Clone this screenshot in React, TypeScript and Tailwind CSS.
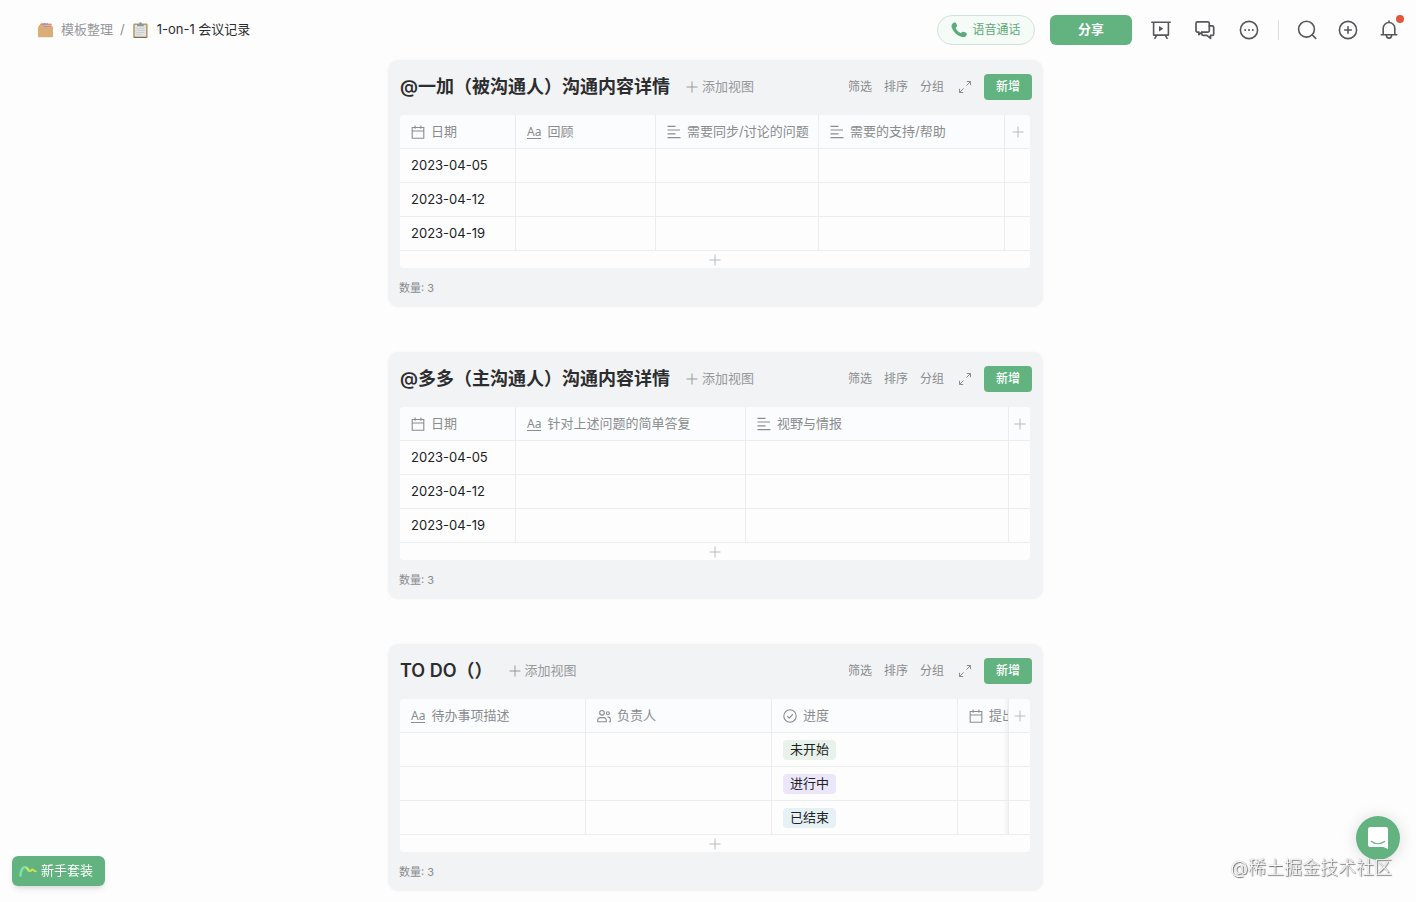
import type { ReactNode } from "react";

type IconProps = { className?: string };

function Svg({ className, children, width = 1.5 }: IconProps & { children: ReactNode; width?: number }) {
  return (
    <svg
      viewBox="0 0 20 20"
      fill="none"
      stroke="currentColor"
      strokeWidth={width}
      strokeLinecap="round"
      strokeLinejoin="round"
      className={className}
      aria-hidden="true"
    >
      {children}
    </svg>
  );
}

const PresentIcon = () => (
  <Svg className="size-5" width={1.6}>
    <path d="M0.8 2.2h18.4M2.6 2.2v12.9h14.8V2.2M5.6 15.3l-1.7 3M14.4 15.3l1.7 3" />
    <path d="M8 6v5.400l4.300-2.700z" fill="currentColor" stroke="none" />
  </Svg>
);

const ChatIcon = () => (
  <Svg className="size-5" width={1.7}>
    <path d="M14.300 6V3.400a1.500 1.500 0 0 0-1.500-1.500H2.500A1.500 1.500 0 0 0 1 3.400v7.200a1.500 1.500 0 0 0 1.500 1.500h1.400v2.600l3-2.600h5.900a1.500 1.500 0 0 0 1.500-1.500V6" />
    <path d="M14.300 5.900h2.900a1.500 1.500 0 0 1 1.500 1.500v6.500a1.500 1.500 0 0 1-1.500 1.500h-1.700v3l-3.600-3H8.300a1.500 1.500 0 0 1-1.500-1.500v-1.800" />
  </Svg>
);

const MoreIcon = () => (
  <Svg className="size-5" width={1.6}>
    <circle cx="10" cy="10" r="8.6" />
    <g fill="currentColor" stroke="none">
      <circle cx="6.200" cy="10" r="1" />
      <circle cx="10" cy="10" r="1" />
      <circle cx="13.800" cy="10" r="1" />
    </g>
  </Svg>
);

const SearchIcon = () => (
  <Svg className="size-5" width={1.6}>
    <circle cx="9.500" cy="9.200" r="7.900" />
    <path d="M15.100 14.800l3.600 3.600" />
  </Svg>
);

const PlusCircleIcon = () => (
  <Svg className="size-5" width={1.6}>
    <circle cx="10" cy="10" r="8.600" />
    <path d="M10 6.700v6.600M6.700 10h6.600" />
  </Svg>
);

const BellIcon = () => (
  <Svg className="size-5" width={1.6}>
    <path d="M2.200 14.700h15.600M4.200 14.700V8.300a5.800 5.800 0 0 1 11.600 0v6.400M10 2.400V1.100M7.400 15.200a2.600 2.900 0 0 0 5.200 0" />
  </Svg>
);

const PhoneIcon = () => (
  <svg viewBox="0 0 16 16" fill="currentColor" className="size-4" aria-hidden="true">
    <path d="M1.300 1.900C2.200.900 3.500.200 4.300.600c.800.500 1.800 2.400 1.800 3.400 0 .800-1.300 1.300-1.300 2 0 1.500 3.500 4.700 5 4.900.800.100 1.300-1 2.100-1.100 1-.100 3.200.800 3.800 1.600.500.800-.200 2.200-1.100 3-1.100.900-3.200.900-5 .200C5.800 13.200 2.400 9.800.900 6 .200 4.200.500 2.800 1.300 1.900z" />
  </svg>
);

const PlusIcon = ({ className = "size-3" }: IconProps) => (
  <svg viewBox="0 0 12 12" fill="none" stroke="currentColor" className={className} aria-hidden="true">
    <path d="M6 .5v11M.5 6h11" />
  </svg>
);

const ExpandIcon = () => (
  <svg viewBox="0 0 14 14" fill="none" stroke="currentColor" className="size-3.5" aria-hidden="true">
    <path d="M8.800 1.500h3.700v3.700M12.500 1.500L8.400 5.600M5.200 12.500H1.500V8.800M1.500 12.500l4.100-4.100" />
  </svg>
);

const CalendarIcon = () => (
  <svg viewBox="0 0 14 14" fill="none" stroke="currentColor" strokeWidth="1.1" className="size-3.5 shrink-0" aria-hidden="true">
    <path d="M1.200 2.500h11.600v10.700H1.200zM1.200 6h11.600M4.100.600v3.200M9.900.600v3.200" />
  </svg>
);

const LinesIcon = () => (
  <svg viewBox="0 0 14 14" fill="none" stroke="currentColor" strokeWidth="1.200" className="size-3.5 shrink-0" aria-hidden="true">
    <path d="M.500 1.300h8M.500 5h12.500M.500 8.800h8M.500 12.600h13" />
  </svg>
);

const PeopleIcon = () => (
  <svg viewBox="0 0 14 14" fill="none" stroke="currentColor" strokeWidth="1.100" className="size-3.5 shrink-0" aria-hidden="true">
    <circle cx="5" cy="3.800" r="2.300" />
    <path d="M.700 12.800v-1.500a2.700 2.700 0 0 1 2.700-2.700h3.200a2.700 2.700 0 0 1 2.700 2.700v1.500z" />
    <circle cx="10.900" cy="4.300" r="1.500" />
    <path d="M10.600 8.100h.700a2 2 0 0 1 2 2v2.700h-1.500" />
  </svg>
);

const StatusIcon = () => (
  <svg viewBox="0 0 14 14" fill="none" stroke="currentColor" strokeWidth="1.100" className="size-3.5 shrink-0" aria-hidden="true">
    <circle cx="7" cy="7" r="6.200" />
    <path d="M4.300 7.200l2 1.900 3.600-3.900" />
  </svg>
);

const TextIcon = () => (
  <span aria-hidden="true" className="shrink-0 border-b border-current font-['Noto_Sans',sans-serif] text-xs leading-[13px]">
    Aa
  </span>
);

const FolderIcon = () => (
  <svg viewBox="0 0 17 17" className="size-[17px]" aria-hidden="true">
    <path d="M2.200 4L4 1.200h4V6H2z" fill="#e88a62" />
    <path d="M6.800 1.400h4V6h-4z" fill="#6f7fc4" />
    <path d="M9.800 1.700h4.700V6H9.800z" fill="#dc6a5e" />
    <path d="M6.800 3.200h7.400" stroke="#eef" strokeWidth=".8" />
    <path d="M1 5.400L2.600 3h3l1.500 1.600H16v9.600a1 1 0 0 1-1 1H2a1 1 0 0 1-1-1z" fill="#d9ae78" />
  </svg>
);

const ClipboardIcon = () => (
  <svg viewBox="0 0 17 17" className="size-[17px]" aria-hidden="true">
    <rect x="1.200" y="1.500" width="14.400" height="14.600" rx="1.200" fill="#b79c6c" />
    <path d="M2.800 3h11.200v11.600H2.800z" fill="#dfe3e3" />
    <path d="M4.300 6.300h8.200M4.300 8.400h8.200M4.300 10.500h8.200M4.300 12.600h5" stroke="#c3c9cb" strokeWidth=".8" />
    <path d="M5 1.900h1.800a1.600 1.600 0 0 1 3.200 0h1.800v2.300H5z" fill="#8f9899" />
    <path d="M2 15.500h12.800" stroke="#6b5f42" strokeWidth=".8" />
  </svg>
);

const ICONS = {
  date: <CalendarIcon />,
  text: <TextIcon />,
  long: <LinesIcon />,
  people: <PeopleIcon />,
  status: <StatusIcon />,
};

type Column = { label: string; icon: keyof typeof ICONS; width: string };
type Board = {
  title: string;
  columns: Column[];
  addWidth: string;
  rows: ReactNode[][];
  scrolled?: boolean;
};

const DATES = ["2023-04-05", "2023-04-12", "2023-04-19"];

const Tag = ({ className, children }: { className: string; children: ReactNode }) => (
  <span className={`inline-flex h-5 items-center rounded px-[7px] align-middle ${className}`}>{children}</span>
);

const BOARDS: Board[] = [
  {
    title: "@一加（被沟通人）沟通内容详情",
    columns: [
      { label: "日期", icon: "date", width: "w-[116px]" },
      { label: "回顾", icon: "text", width: "w-[140px]" },
      { label: "需要同步/讨论的问题", icon: "long", width: "w-[163px]" },
      { label: "需要的支持/帮助", icon: "long", width: "w-auto" },
    ],
    addWidth: "w-[25px]",
    rows: DATES.map((d) => [d, "", "", ""]),
  },
  {
    title: "@多多（主沟通人）沟通内容详情",
    columns: [
      { label: "日期", icon: "date", width: "w-[116px]" },
      { label: "针对上述问题的简单答复", icon: "text", width: "w-[230px]" },
      { label: "视野与情报", icon: "long", width: "w-auto" },
    ],
    addWidth: "w-[21px]",
    rows: DATES.map((d) => [d, "", ""]),
  },
  {
    title: "TO DO（）",
    columns: [
      { label: "待办事项描述", icon: "text", width: "w-[186px]" },
      { label: "负责人", icon: "people", width: "w-[186px]" },
      { label: "进度", icon: "status", width: "w-[186px]" },
      { label: "提出", icon: "date", width: "w-auto" },
    ],
    addWidth: "w-[21px]",
    scrolled: true,
    rows: [
      ["", "", <Tag className="bg-[#e8f2ea]">未开始</Tag>, ""],
      ["", "", <Tag className="bg-[#ebe6fa]">进行中</Tag>, ""],
      ["", "", <Tag className="bg-[#e6f1f5]">已结束</Tag>, ""],
    ],
  },
];

function BoardCard({ title, columns, addWidth, rows, scrolled }: Board) {
  const edge = scrolled ? "shadow-[inset_-6px_0_5px_-5px_rgba(0,0,0,0.07)]" : "";
  return (
    <section className="rounded-[10px] bg-[#f2f3f5] shadow-[0_0_3px_rgba(0,0,0,0.04)]">
      <div className="flex h-[55px] items-center pr-[11px] pb-0.5 pl-3">
        <h2 className="text-lg font-semibold whitespace-nowrap text-[#2c2d2e]">{title}</h2>
        <button type="button" className="ml-4 flex items-center gap-1 text-[13px] whitespace-nowrap text-[#96989b]">
          <PlusIcon />
          添加视图
        </button>
        <div className="ml-auto flex items-center gap-3 text-xs whitespace-nowrap text-[#8a8c8f]">
          <button type="button">筛选</button>
          <button type="button">排序</button>
          <button type="button">分组</button>
          <button type="button" aria-label="展开" className="ml-0.5">
            <ExpandIcon />
          </button>
          <button type="button" className="h-[26px] w-12 rounded bg-[#62b37f] font-medium text-white">
            新增
          </button>
        </div>
      </div>

      <div className="mr-[13px] ml-3 overflow-hidden rounded bg-[#fdfdfe]">
        <table className="w-full table-fixed border-separate border-spacing-0 text-left text-[13px]">
          <colgroup>
            {columns.map((c) => (
              <col key={c.label} className={c.width} />
            ))}
            <col className={addWidth} />
          </colgroup>
          <thead className="text-[#8a8c8f]">
            <tr className="h-[34px] bg-[#fbfcfe]">
              {columns.map((c, i) => (
                <th
                  key={c.label}
                  scope="col"
                  className={`overflow-hidden border-r border-b border-[#ebecee] p-0 pl-[11px] font-normal ${i === columns.length - 1 ? edge : ""}`}
                >
                  <span className="flex items-center gap-1.5 whitespace-nowrap">
                    {ICONS[c.icon]}
                    {c.label}
                  </span>
                </th>
              ))}
              <th scope="col" className="border-b border-[#ebecee] p-0 text-[#b9bbbe]">
                <button type="button" aria-label="添加列" className="flex w-full justify-center">
                  <PlusIcon />
                </button>
              </th>
            </tr>
          </thead>
          <tbody className="text-[#202122]">
            {rows.map((row, r) => (
              <tr key={r} className="h-[34px]">
                {row.map((cell, i) => (
                  <td
                    key={i}
                    className={`border-r border-b border-[#ebecee] p-0 pl-[11px] ${i === row.length - 1 ? edge : ""}`}
                  >
                    {cell}
                  </td>
                ))}
                <td className="border-b border-[#ebecee] p-0" />
              </tr>
            ))}
          </tbody>
        </table>
        <button type="button" aria-label="添加行" className="flex h-[17px] w-full items-center justify-center text-[#b9bbbe]">
          <PlusIcon />
        </button>
      </div>

      <p className="flex h-[39px] items-center px-[11px] pt-0.5 text-[11px] text-[#8a8c8f]">数量: {rows.length}</p>
    </section>
  );
}

export default function App() {
  return (
    <div className="min-h-screen bg-[#fdfdfd] pb-3 font-['Inter','Noto_Sans_CJK_SC',sans-serif] text-[#2c2d2e]">
      <header className="flex h-[60px] items-center pr-[17px] pl-[37px]">
        <nav aria-label="路径" className="flex items-center text-[13px] whitespace-nowrap">
          <a href="#templates" className="flex items-center gap-[7px] text-[#96989b]">
            <FolderIcon />
            模板整理
          </a>
          <span className="mx-[7px] text-[#8a8c8f]">/</span>
          <a href="#meeting" className="flex items-center gap-2">
            <ClipboardIcon />
            1-on-1 会议记录
          </a>
        </nav>
        <div className="ml-auto flex items-center">
          <button
            type="button"
            className="flex h-[30px] w-[98px] items-center justify-center gap-[5px] rounded-full border border-[#cfe3d6] bg-[#f5fbf7] text-xs whitespace-nowrap text-[#5cab78]"
          >
            <PhoneIcon />
            语音通话
          </button>
          <button type="button" className="ml-[15px] h-[30px] w-[82px] rounded-md bg-[#62b37f] text-[13px] font-bold text-white">
            分享
          </button>
          <div className="ml-[19px] flex gap-6 text-[#55575a]">
            <button type="button" aria-label="演示"><PresentIcon /></button>
            <button type="button" aria-label="评论"><ChatIcon /></button>
            <button type="button" aria-label="更多"><MoreIcon /></button>
          </div>
          <div className="mr-[18px] ml-[19px] h-5 w-px bg-[#dcdddf]" />
          <div className="flex gap-[21px] text-[#55575a]">
            <button type="button" aria-label="搜索"><SearchIcon /></button>
            <button type="button" aria-label="新建"><PlusCircleIcon /></button>
            <button type="button" aria-label="通知" className="relative">
              <BellIcon />
              <span className="absolute -top-[5px] -right-[5px] size-2 rounded-full bg-[#e0573e]" />
            </button>
          </div>
        </div>
      </header>

      <main className="pl-[15px]">
        <div className="mx-auto flex max-w-[655px] flex-col gap-[45px]">
          {BOARDS.map((b) => (
            <BoardCard key={b.title} {...b} />
          ))}
        </div>
      </main>

      <button
        type="button"
        className="fixed bottom-4 left-3 flex h-[30px] items-center gap-1 rounded-md bg-[#62b37f] pr-3 pl-[7px] text-[13px] whitespace-nowrap text-white shadow-md shadow-black/10"
      >
        <svg viewBox="0 0 18 12" fill="none" strokeLinecap="round" className="h-3 w-[18px]" aria-hidden="true">
          <path d="M1.500 10.500C1.500 6 3.500 2 6 2c2 0 2.500 2 3.500 3.500" stroke="#7de0a8" strokeWidth="2.600" />
          <path d="M7.500 3c1.500 0 2 3 3.500 3s1.500-1.500 2.500-1.500 1 1.800 3.300 1.800" stroke="#d9e34a" strokeWidth="1.800" />
        </svg>
        新手套装
      </button>

      <button
        type="button"
        aria-label="在线客服"
        className="fixed right-4 bottom-[42px] flex size-11 items-center justify-center rounded-full bg-[#62b37f] shadow-[0_1px_16px_rgba(0,0,0,0.14)]"
      >
        <svg viewBox="0 0 20 22" className="h-[22px] w-5" aria-hidden="true">
          <path d="M2.200 0h15.600A2.200 2.200 0 0 1 20 2.200V22l-4.500-2H2.200A2.200 2.200 0 0 1 0 17.800V2.200A2.200 2.200 0 0 1 2.200 0z" fill="#fff" />
          <path d="M3.500 14.500c3.700 3 9.300 3 13 0" fill="none" stroke="#62b37f" strokeWidth="1.200" strokeLinecap="round" />
        </svg>
      </button>
      <p className="pointer-events-none fixed right-6 bottom-5 text-lg font-light whitespace-nowrap text-white [text-shadow:1px_1px_1px_#666,0_0_1px_#888]">
        @稀土掘金技术社区
      </p>
    </div>
  );
}
